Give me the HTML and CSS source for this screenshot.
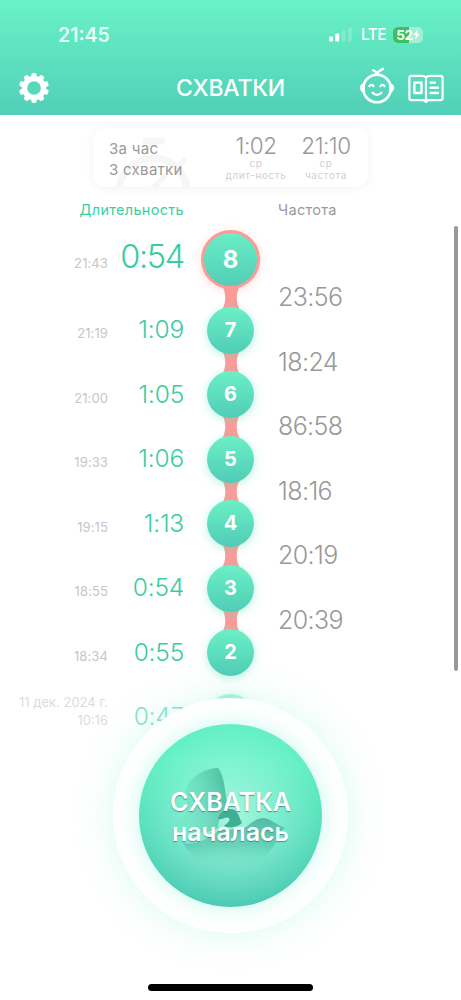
FILE: index.html
```html
<!DOCTYPE html>
<html lang="ru">
<head>
   <meta charset="utf-8"/>
   <meta name="viewport" content="width=device-width, initial-scale=1" />
   <title>Схватки</title>
   <link rel="stylesheet" href="styles.css">
</head>

<body>
<header>
   <!--status bar-->
   <div class="status">
      <span class="clock">21:45</span>
      <svg class="signal" width="23" height="15" viewBox="0 0 23 15" fill="#fff">
         <rect x="0" y="9.5" width="4" height="5" rx="1"/>
         <rect x="6.2" y="6.5" width="4" height="8" rx="1"/>
         <rect x="12.6" y="3.5" width="4" height="11" rx="1" opacity=".2"/>
         <rect x="19" y="0.5" width="4" height="14" rx="1" opacity=".2"/>
      </svg>
      <span class="lte">LTE</span>
      <span class="battery">52<svg width="7" height="11" viewBox="0 0 7 11"><path d="M4.6 0.5 0.4 6.1H3L2.2 10.5 6.7 4.7H4z" fill="#fff"/></svg></span>
   </div>
   <!--navigation-->
   <nav>
      <svg class="gear" width="32" height="32" viewBox="-16 -16 32 32">
         <g fill="#fff">
            <rect x="-2.6" y="-15" width="5.2" height="30" rx="1.8"/>
            <rect x="-2.6" y="-15" width="5.2" height="30" rx="1.8" transform="rotate(36)"/>
            <rect x="-2.6" y="-15" width="5.2" height="30" rx="1.8" transform="rotate(72)"/>
            <rect x="-2.6" y="-15" width="5.2" height="30" rx="1.8" transform="rotate(108)"/>
            <rect x="-2.6" y="-15" width="5.2" height="30" rx="1.8" transform="rotate(144)"/>
            <circle r="12.2"/>
         </g>
         <circle r="6.8" fill="#58d9bc"/>
      </svg>
      <h1>СХВАТКИ</h1>
      <svg class="baby" width="36" height="38" viewBox="0 0 36 38" fill="none" stroke="#fff" stroke-width="2.6" stroke-linecap="round" stroke-linejoin="round">
         <circle cx="18" cy="21.5" r="13.8"/>
         <path d="M4.8 17.5C1.2 18.5 0.4 22 4.8 25zM31.2 17.5C34.8 18.5 35.6 22 31.2 25z" fill="#fff" stroke-width="2"/>
         <path d="M18.3 8V6.5C19 4.6 21.5 3 24 1.8M18.3 7C17.6 5 16.4 4.2 14.3 3.4"/>
         <path d="M10.4 19.2c.8-1.9 3.4-1.9 4.2 0M21.4 19.2c.8-1.9 3.4-1.9 4.2 0M13.6 25.6c2.2 2.9 6.6 2.9 8.8 0" stroke-width="2.2"/>
      </svg>
      <svg class="book" width="36" height="30" viewBox="0 0 36 30" fill="none" stroke="#fff" stroke-width="2.2" stroke-linecap="round" stroke-linejoin="round">
         <path d="M18 3.6C16.8 2 15.5 1.8 14 1.8H3.6C2 1.8 1.4 2.6 1.4 4V24c0 1.5.8 2.2 2.2 2.2H14c2 0 3 .5 4 1.8 1-1.3 2-1.8 4-1.8H32.4c1.4 0 2.2-.7 2.2-2.2V4c0-1.4-.6-2.2-2.2-2.2H22c-1.5 0-2.8.2-4 1.8zV27"/>
         <rect x="6.3" y="8.6" width="7.2" height="10.4" stroke-width="2.4"/>
         <path d="M22.6 8.6H27M22.6 13.8H30M22.6 19H30" stroke-width="2.4"/>
      </svg>
   </nav>
</header>

<!--summary for the last hour-->
<section class="summary">
   <svg class="stopwatch" width="84" height="51" viewBox="0 0 84 51" fill="none" stroke="#f6f6f6" stroke-width="7">
      <path d="M35 5H51" stroke-width="7" stroke-linecap="round"/>
      <circle cx="42" cy="56" r="34"/>
      <path d="M68 30 73 24M40 54 53 41" stroke-width="5" stroke-linecap="round"/>
   </svg>
   <p class="hour">За час<br>3 схватки</p>
   <div class="avg avg-length"><b>1:02</b><span>ср<br>длит-ность</span></div>
   <div class="avg avg-period"><b>21:10</b><span>ср<br>частота</span></div>
</section>

<div class="titles">
   <span class="title-length">Длительность</span>
   <span class="title-period">Частота</span>
</div>

<main>
   <!--time and length of each contraction-->
   <div class="lengths">
      <div class="row first"><time>21:43</time><span>0:54</span></div>
      <div class="row"><time>21:19</time><span>1:09</span></div>
      <div class="row"><time>21:00</time><span>1:05</span></div>
      <div class="row"><time>19:33</time><span>1:06</span></div>
      <div class="row"><time>19:15</time><span>1:13</span></div>
      <div class="row"><time>18:55</time><span>0:54</span></div>
      <div class="row"><time>18:34</time><span>0:55</span></div>
      <div class="row old"><time>11 дек. 2024 г.<br>10:16</time><span>0:47</span></div>
   </div>
   <!--chain of beads-->
   <div class="chain">
      <div class="bead big">8</div>
      <svg class="link" viewBox="0 0 20 26"><path d="M0 0H20C14.5 6 14.5 20 20 26H0C5.5 20 5.5 6 0 0z"/></svg>
      <div class="bead">7</div>
      <svg class="link" viewBox="0 0 20 26"><path d="M0 0H20C14.5 6 14.5 20 20 26H0C5.5 20 5.5 6 0 0z"/></svg>
      <div class="bead">6</div>
      <svg class="link" viewBox="0 0 20 26"><path d="M0 0H20C14.5 6 14.5 20 20 26H0C5.5 20 5.5 6 0 0z"/></svg>
      <div class="bead">5</div>
      <svg class="link" viewBox="0 0 20 26"><path d="M0 0H20C14.5 6 14.5 20 20 26H0C5.5 20 5.5 6 0 0z"/></svg>
      <div class="bead">4</div>
      <svg class="link" viewBox="0 0 20 26"><path d="M0 0H20C14.5 6 14.5 20 20 26H0C5.5 20 5.5 6 0 0z"/></svg>
      <div class="bead">3</div>
      <svg class="link" viewBox="0 0 20 26"><path d="M0 0H20C14.5 6 14.5 20 20 26H0C5.5 20 5.5 6 0 0z"/></svg>
      <div class="bead">2</div>
      <div class="bead old-bead"></div>
   </div>
   <!--time between contractions-->
   <div class="periods">
      <span>23:56</span>
      <span>18:24</span>
      <span>86:58</span>
      <span>18:16</span>
      <span>20:19</span>
      <span>20:39</span>
   </div>
   <div class="scrollbar"></div>
</main>

<!--start button-->
<div class="ring">
   <button class="start">
      <svg class="flower" width="184" height="184" viewBox="0 0 184 184">
         <defs>
            <linearGradient id="petal-left" x1="1" y1=".45" x2="0" y2=".65">
               <stop offset="0" stop-color="#3fae92" stop-opacity=".8"/>
               <stop offset="1" stop-color="#5ad9b8" stop-opacity=".05"/>
            </linearGradient>
            <linearGradient id="petal-bottom" x1="0" y1="0" x2="0" y2="1">
               <stop offset="0" stop-color="#43ae98" stop-opacity=".8"/>
               <stop offset=".55" stop-color="#4fbfa6" stop-opacity=".55"/>
               <stop offset="1" stop-color="#78e6c9" stop-opacity="0"/>
            </linearGradient>
         </defs>
         <path d="M79 44C66 44 52 52 47 64 44 74 52 82 46 90 43 96 38 100 34 101 50 112 68 110 79 104 79 94 84 88 91 86 85 77 88 56 79 44z" fill="url(#petal-left)"/>
         <path d="M44 119C60 122 72 112 84 104 92 107 100 105 107 103 113 98 118 94 125 94 132 95 136 100 146 104 138 108 140 116 134 123 124 138 108 144 91 144 72 144 54 138 44 119z" fill="url(#petal-bottom)"/>
         <path d="M79 95C80 89 86 85 93 85 99 86 100 93 103 99 99 103 91 105 85 102 88 99 92 97 90 94 87 92 84 96 79 95z" fill="#3fae92"/>
      </svg>
      <span class="label">СХВАТКА<br>началась</span>
   </button>
</div>
<div class="home"></div>
</body>
</html>
```

FILE: styles.css
```css
/* page */
body {
   margin: 0;
   width: 461px;
   height: 1000px;
   position: relative;
   overflow: hidden;
   background: #fff;
   font-family: Inter, "Liberation Sans", sans-serif;
}

/* header with status bar and navigation */
header {
   height: 115px;
   background: linear-gradient(#69f2c7, #51cfb8);
   color: #fff;
}

.status {
   display: flex;
   align-items: center;
   height: 47px;
   padding: 11px 39px 0 58px;
}

.clock {
   flex: 1;
   font-size: 19.5px;
   font-weight: 600;
   color: #e6fff6;
}

.signal {
   margin-right: 9px;
}

.lte {
   width: 24px;
   font-size: 15.5px;
   font-weight: 500;
   letter-spacing: -.6px;
   margin-right: 8px;
}

.battery {
   display: flex;
   align-items: center;
   justify-content: center;
   width: 30px;
   height: 16px;
   border-radius: 5px;
   background: linear-gradient(90deg, #3cc25c 52%, #a5efd4 52%);
   font-size: 13.5px;
   font-weight: 700;
   letter-spacing: -.3px;
   margin-right: -1px;
}

nav {
   display: flex;
   align-items: center;
   height: 59px;
   padding: 0 17px 0 18px;
}

h1 {
   flex: 1;
   margin: 0 0 0 126px;
   font-size: 23px;
   line-height: 30px;
   font-weight: 500;
   letter-spacing: -.2px;
}

.baby {
   margin: -4px 13px 0 0;
}

.book {
   margin-top: 3px;
}

/* summary card */
.summary {
   display: flex;
   position: relative;
   box-sizing: border-box;
   width: 275px;
   height: 59px;
   margin: 13px 0 0 93px;
   padding-left: 16px;
   border-radius: 12px;
   box-shadow: 0 1px 10px rgba(0, 0, 0, .06);
   color: #999;
}

.stopwatch {
   position: absolute;
   left: 18px;
   top: 8px;
}

.hour {
   position: relative;
   width: 107px;
   margin: 10px 0 0;
   font-size: 15px;
   line-height: 21px;
   letter-spacing: .3px;
}

.avg {
   display: flex;
   flex-direction: column;
   align-items: center;
   width: 80px;
   padding-top: 7px;
}

.avg-period {
   width: 60px;
}

.avg b {
   font-size: 22.5px;
   line-height: 22px;
   font-weight: 350;
   letter-spacing: -.5px;
}

.avg span {
   text-align: center;
   font-size: 10px;
   line-height: 12px;
   letter-spacing: .6px;
   color: #cfcfcf;
}

/* column titles */
.titles {
   display: flex;
   height: 20px;
   margin-top: 13px;
   font-size: 14.5px;
   line-height: 20px;
   letter-spacing: .3px;
}

.title-length {
   width: 184px;
   margin-right: 94px;
   text-align: right;
   color: #3bcfa3;
}

.title-period {
   color: #999;
}

/* contractions */
main {
   display: flex;
   position: relative;
   height: 525px;
}

.lengths {
   width: 184px;
}

.row {
   display: flex;
   align-items: baseline;
   justify-content: flex-end;
   height: 64.5px;
   line-height: 64.5px;
}

.row time {
   width: 108px;
   text-align: right;
   font-size: 13px;
   letter-spacing: .1px;
   color: #c6c6c6;
}

.row span {
   width: 76px;
   text-align: right;
   font-size: 24.5px;
   font-weight: 350;
   letter-spacing: -.2px;
   color: #38cda1;
}

.row.first {
   height: 77px;
   line-height: 74px;
}

.row.first span {
   font-size: 32.5px;
   letter-spacing: -1.3px;
}

.row.old {
   align-items: flex-start;
   opacity: .6;
}

.row.old time {
   padding-top: 9px;
   line-height: 18px;
   letter-spacing: 0;
}

.chain {
   display: flex;
   flex-direction: column;
   align-items: center;
   width: 93px;
   padding-top: 10px;
}

.bead {
   flex: none;
   position: relative;
   width: 47px;
   height: 47px;
   border-radius: 50%;
   background: linear-gradient(#6bf0c6, #50ccb6);
   box-shadow: 0 2px 10px rgba(82, 225, 184, .4);
   color: #fff;
   font-size: 20px;
   line-height: 46px;
   font-weight: 700;
   text-align: center;
}

.bead.big {
   box-sizing: border-box;
   width: 59px;
   height: 59px;
   border: 3px solid #fd9a97;
   background-origin: border-box;
   box-shadow: 0 2px 10px rgba(253, 154, 151, .35);
   font-size: 24px;
   line-height: 53px;
}

.link {
   flex: none;
   width: 20px;
   height: 25.5px;
   margin: -4px 0;
   fill: #fd9a97;
}

.old-bead {
   margin-top: 17.5px;
   opacity: .6;
}

.periods {
   display: flex;
   flex-direction: column;
   padding: 45px 0 0 1px;
   font-size: 25px;
   line-height: 64.5px;
   font-weight: 350;
   letter-spacing: -.6px;
   color: #999;
}

.scrollbar {
   position: absolute;
   right: 3px;
   top: 6px;
   width: 4px;
   height: 445px;
   border-radius: 2px;
   background: #999;
}

/* round button lies over the list */
.ring {
   display: flex;
   align-items: center;
   justify-content: center;
   position: absolute;
   left: 113px;
   top: 698px;
   width: 235px;
   height: 235px;
   border-radius: 50%;
   background: #fff;
   box-shadow: 0 0 36px rgba(105, 240, 198, .25);
}

.start {
   position: relative;
   width: 183px;
   height: 183px;
   padding: 0;
   border: 0;
   border-radius: 50%;
   background: radial-gradient(circle closest-side, rgba(190, 255, 235, .75), rgba(190, 255, 235, 0)), linear-gradient(#62f0c3 20%, #4ccab4);
   box-shadow: 0 0 22px rgba(90, 240, 200, .35);
   color: #fff;
   font-family: inherit;
}

.flower {
   position: absolute;
   left: 0;
   top: 0;
}

.label {
   display: block;
   position: relative;
   padding-top: 2px;
   font-size: 25px;
   line-height: 30px;
   font-weight: 600;
   letter-spacing: 0;
   text-shadow: 0 1px 1px rgba(50, 130, 120, .8);
}

/* home indicator */
.home {
   position: absolute;
   left: 148px;
   top: 984px;
   width: 165px;
   height: 7px;
   border-radius: 4px;
   background: #000;
}
```
